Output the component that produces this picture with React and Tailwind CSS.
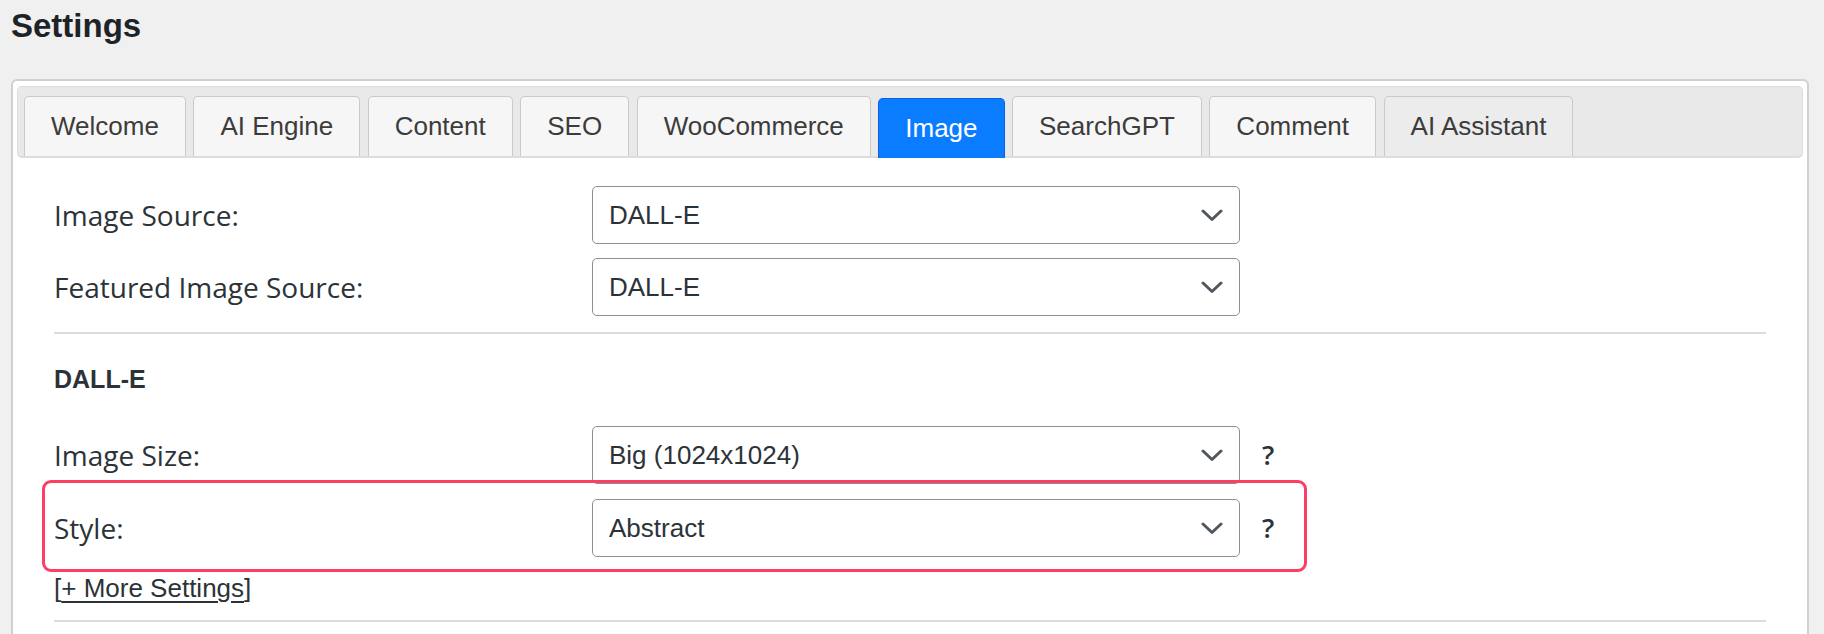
import { useState } from "react";

// ── Data ──────────────────────────────────────────────────────────────────────

const tabs = [
  "Welcome",
  "AI Engine",
  "Content",
  "SEO",
  "WooCommerce",
  "Image",
  "SearchGPT",
  "Comment",
  "AI Assistant",
];

const sans = "font-['Liberation_Sans',Arial,sans-serif]";
const open = "font-['Open_Sans','Noto_Sans',sans-serif]";

// ── Pieces ────────────────────────────────────────────────────────────────────

function Chevron() {
  return (
    <svg width="22" height="13" viewBox="0 0 22 13" fill="none" aria-hidden="true">
      <polyline
        points="2 2 11 10.5 20 2"
        stroke="#50575e"
        strokeWidth="3"
        strokeLinecap="round"
        strokeLinejoin="round"
      />
    </svg>
  );
}

function Select({ value }) {
  return (
    <div className="w-[648px] h-[58px] flex items-center justify-between border-[1.5px] border-[#8c8f94] rounded-[5px] bg-white pl-[16px] pr-[16px]">
      <span className={`${sans} text-[26px] text-[#2c3338]`}>{value}</span>
      <Chevron />
    </div>
  );
}

function Row({ label, value, help }) {
  return (
    <div className="flex items-center">
      <div className={`${open} w-[538px] text-[28px] text-[#2c3338]`}>{label}</div>
      <Select value={value} />
      {help && (
        <span className={`${open} ml-[22px] text-[27px] font-semibold text-[#2c3338]`}>?</span>
      )}
    </div>
  );
}

// ── Page ──────────────────────────────────────────────────────────────────────

export default function App() {
  const [active, setActive] = useState("Image");

  return (
    <div className="relative min-h-screen bg-[#f0f0f1] overflow-hidden">
      <h1 className={`${sans} pl-[11px] pt-[7px] text-[33px] leading-[38px] font-bold text-[#1d2327]`}>
        Settings
      </h1>

      {/* Panel */}
      <div className="mt-[34px] ml-[11px] mr-[15px] border-2 border-[#d0d0d0] rounded-[6px] bg-white pt-[5px] px-[4px] pb-[40px]">
        {/* Tab bar */}
        <div className="flex items-end gap-[7.5px] h-[72px] pt-[9px] px-[6px] bg-[#e9e9e9] border border-[#dddddd] border-b-2 rounded-[5px]">
          {tabs.map((t) => {
            const isActive = t === active;
            const last = t === "AI Assistant";
            return (
              <button
                key={t}
                onClick={() => setActive(t)}
                className={`${sans} h-full px-[26px] text-[26px] rounded-t-[5px] border border-b-0 ${
                  isActive
                    ? "bg-[#0a7cff] border-[#0b5fe6] text-white -mb-[2px] h-[calc(100%+2px)]"
                    : last
                    ? "bg-[#ececec] border-[#cacaca] text-[#3c3c3c]"
                    : "bg-[#f6f6f6] border-[#cacaca] text-[#3c3c3c]"
                }`}
              >
                {t}
              </button>
            );
          })}
        </div>

        {/* Content */}
        <div className="px-[37px] pt-[28px]">
          <div className="flex flex-col gap-[14px]">
            <Row label="Image Source:" value="DALL-E" />
            <Row label="Featured Image Source:" value="DALL-E" />
          </div>

          <div className="mt-[16px] h-[2px] bg-[#dcdcde]" />

          <div className={`${sans} h-[92px] flex items-center text-[25px] font-bold text-[#2c3338]`}>
            DALL-E
          </div>

          <div className="flex flex-col gap-[15px]">
            <Row label="Image Size:" value="Big (1024x1024)" help />
            <Row label="Style:" value="Abstract" help />
          </div>

          <div className={`${sans} mt-[16px] leading-[30px] text-[26px] text-[#2c3338]`}>
            [<span className="underline underline-offset-[4px] decoration-[1.5px]">+ More Settings</span>]
          </div>

          <div className="mt-[17px] h-[2px] bg-[#dcdcde]" />
        </div>
      </div>

      {/* Highlight annotation */}
      <div className="absolute left-[42px] top-[480px] w-[1265px] h-[92px] border-[3px] border-[#fd3d64] rounded-[9px] pointer-events-none" />
    </div>
  );
}
